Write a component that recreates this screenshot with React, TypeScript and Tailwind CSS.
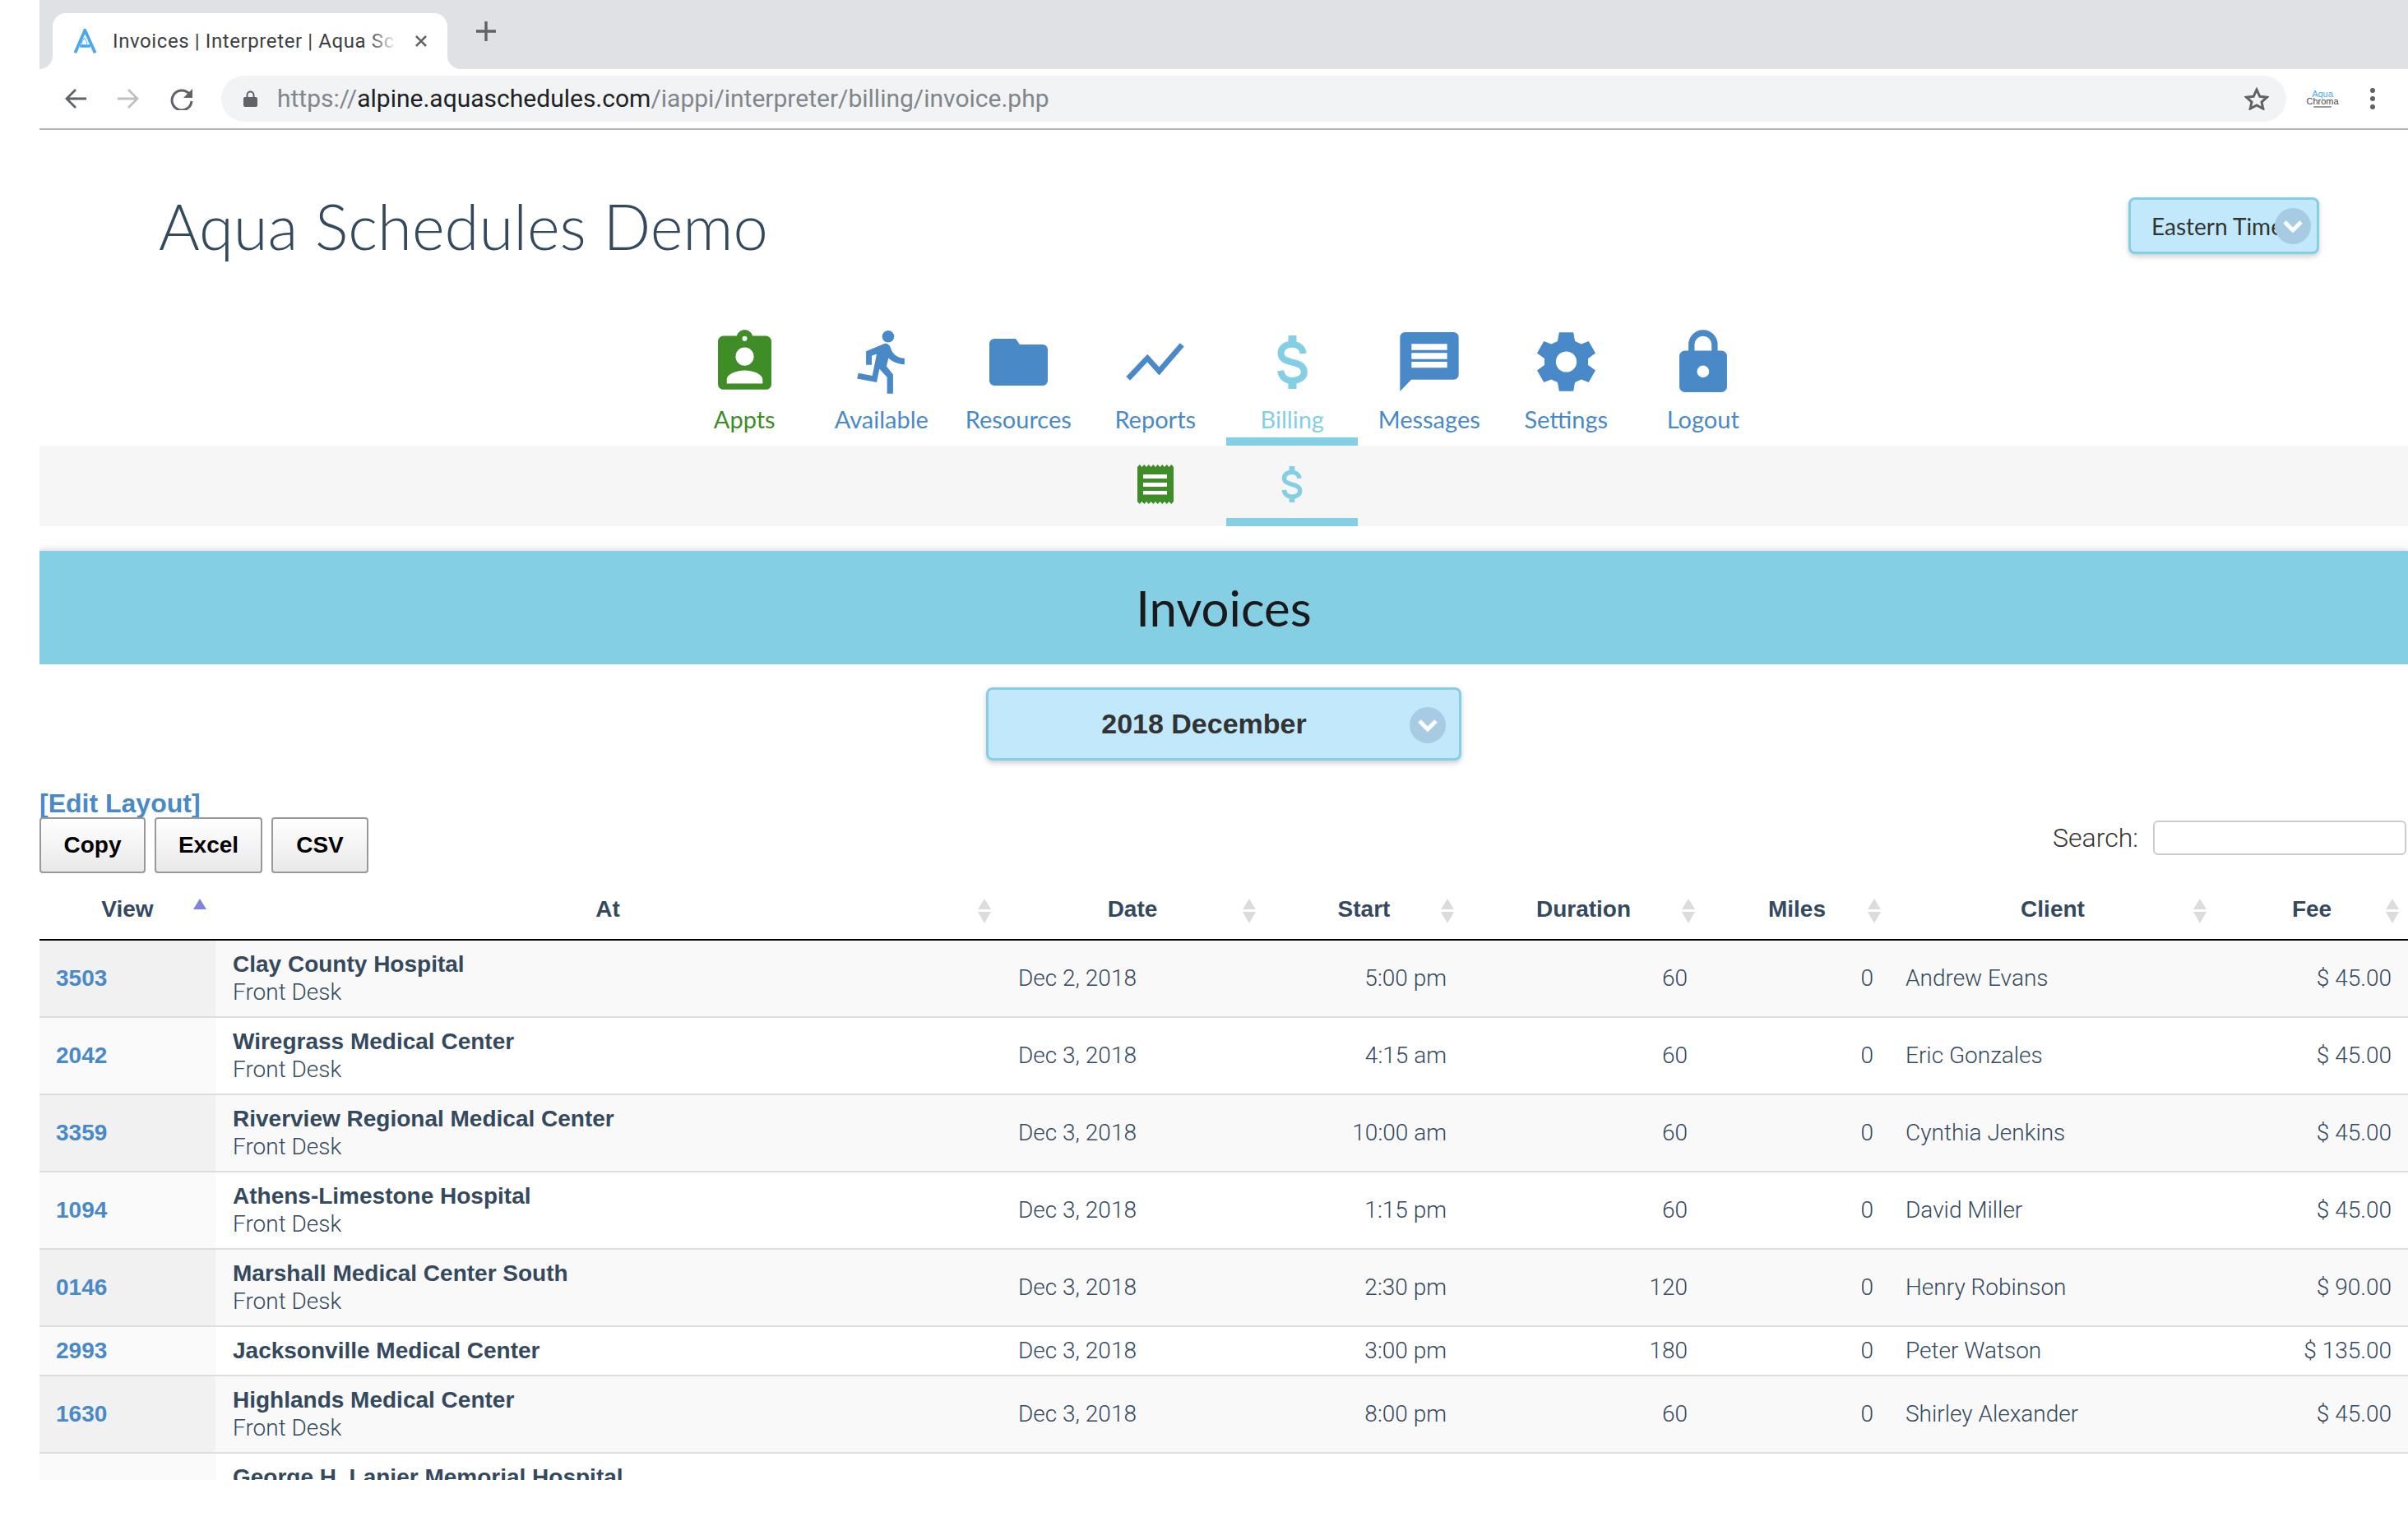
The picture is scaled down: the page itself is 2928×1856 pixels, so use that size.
const rows = [
  { id: '3503', at: 'Clay County Hospital', sub: 'Front Desk', date: 'Dec 2, 2018', start: '5:00 pm', dur: '60', miles: '0', client: 'Andrew Evans', fee: '$ 45.00' },
  { id: '2042', at: 'Wiregrass Medical Center', sub: 'Front Desk', date: 'Dec 3, 2018', start: '4:15 am', dur: '60', miles: '0', client: 'Eric Gonzales', fee: '$ 45.00' },
  { id: '3359', at: 'Riverview Regional Medical Center', sub: 'Front Desk', date: 'Dec 3, 2018', start: '10:00 am', dur: '60', miles: '0', client: 'Cynthia Jenkins', fee: '$ 45.00' },
  { id: '1094', at: 'Athens-Limestone Hospital', sub: 'Front Desk', date: 'Dec 3, 2018', start: '1:15 pm', dur: '60', miles: '0', client: 'David Miller', fee: '$ 45.00' },
  { id: '0146', at: 'Marshall Medical Center South', sub: 'Front Desk', date: 'Dec 3, 2018', start: '2:30 pm', dur: '120', miles: '0', client: 'Henry Robinson', fee: '$ 90.00' },
  { id: '2993', at: 'Jacksonville Medical Center', sub: '', date: 'Dec 3, 2018', start: '3:00 pm', dur: '180', miles: '0', client: 'Peter Watson', fee: '$ 135.00' },
  { id: '1630', at: 'Highlands Medical Center', sub: 'Front Desk', date: 'Dec 3, 2018', start: '8:00 pm', dur: '60', miles: '0', client: 'Shirley Alexander', fee: '$ 45.00' },
  { id: '', at: 'George H. Lanier Memorial Hospital', sub: 'Front Desk', date: '', start: '', dur: '', miles: '', client: '', fee: '' },
];

function SortArrows() {
  return (
    <svg className="absolute right-[11px] top-[31px]" width="16" height="30" viewBox="0 0 16 30">
      <polygon points="8,0 16,13 0,13" fill="#dcdcdc" />
      <polygon points="0,16 16,16 8,30" fill="#dcdcdc" />
    </svg>
  );
}

function Chevron() {
  return (
    <span className="flex h-[44px] w-[44px] items-center justify-center rounded-full bg-[#a6cbe3]">
      <svg width="24" height="16" viewBox="0 0 24 16">
        <path d="M2 3 L12 13 L22 3" fill="none" stroke="#fff" strokeWidth="5" />
      </svg>
    </span>
  );
}

function DollarIcon({ w, h }: { w: number; h: number }) {
  return (
    <svg width={w} height={h} viewBox="572 40 110 195">
      <rect x="612" y="40" width="30" height="40" fill="#84cfe4" />
      <rect x="612" y="195" width="30" height="40" fill="#84cfe4" />
      <path
        d="M667 106 C664 84 646 72 625 72 C601 72 585 87 585 104 C585 128 606 132 627 138 C650 144 670 150 670 174 C670 192 652 205 627 205 C604 205 587 193 584 168"
        fill="none"
        stroke="#84cfe4"
        strokeWidth="24"
      />
    </svg>
  );
}

function Gear() {
  return (
    <svg width="71" height="72" viewBox="-107 -108 214 216">
      <path
        fillRule="evenodd"
        fill="#4a89c7"
        d="M-26 -108 L26 -108 L32 -75 L55 -65 L82 -75 L107 -32 L80 -12 L80 12 L107 32 L82 75 L55 65 L32 75 L26 108 L-26 108 L-32 75 L-55 65 L-82 75 L-107 32 L-80 12 L-80 -12 L-107 -32 L-82 -75 L-55 -65 L-32 -75 Z M38 0 A38 38 0 1 0 -38 0 A38 38 0 1 0 38 0 Z"
      />
    </svg>
  );
}

const navItems = [
  {
    label: 'Appts',
    color: 'text-[#3f8d27]',
    icon: (
      <svg className="mb-[6px]" width="65" height="73" viewBox="42 18 194 217">
        <path
          fillRule="evenodd"
          fill="#3f8d27"
          d="M62 40 H110 C114 26 126 18 139 18 C152 18 164 26 168 40 H216 A20 20 0 0 1 236 60 V215 A20 20 0 0 1 216 235 H62 A20 20 0 0 1 42 215 V60 A20 20 0 0 1 62 40 Z M148 50 A9 9 0 1 0 130 50 A9 9 0 1 0 148 50 Z M172 115 A33 33 0 1 0 106 115 A33 33 0 1 0 172 115 Z M74 213 H204 V198 C204 180 173 165 139 165 C105 165 74 180 74 198 Z"
        />
      </svg>
    ),
  },
  {
    label: 'Available',
    color: 'text-[#4a89c7]',
    icon: (
      <svg className="ml-[-2px]" width="58" height="77" viewBox="540 24 174 232">
        <circle cx="654" cy="46" r="22" fill="#4a89c7" />
        <path
          fill="#4a89c7"
          d="M573 100 L640 72 C652 70 660 78 664 90 C670 108 685 124 714 126 V148 C690 147 668 138 655 125 L648 155 L672 185 V255 H650 V195 L622 165 L612 214 L540 200 L545 180 L596 190 L612 110 L594 117 V150 H573 Z"
        />
      </svg>
    ),
  },
  {
    label: 'Resources',
    color: 'text-[#4a89c7]',
    icon: (
      <svg width="71" height="57" viewBox="0 0 71 57">
        <path fill="#4a89c7" d="M6 0 H32 L37 7 H65 A6 6 0 0 1 71 13 V51 A6 6 0 0 1 65 57 H6 A6 6 0 0 1 0 51 V6 A6 6 0 0 1 6 0 Z" />
      </svg>
    ),
  },
  {
    label: 'Reports',
    color: 'text-[#4a89c7]',
    icon: (
      <svg width="71" height="46" viewBox="28 68 214 139">
        <polyline points="36,199 107,124 150,172 234,75" fill="none" stroke="#4a89c7" strokeWidth="20" />
      </svg>
    ),
  },
  { label: 'Billing', color: 'text-[#84cfe4]', active: true, icon: <DollarIcon w={37} h={65} /> },
  {
    label: 'Messages',
    color: 'text-[#4a89c7]',
    icon: (
      <svg width="72" height="72" viewBox="34 29 214 216">
        <path
          fillRule="evenodd"
          fill="#4a89c7"
          d="M52 29 H230 A18 18 0 0 1 248 47 V184 A18 18 0 0 1 230 202 H75 L34 245 V47 A18 18 0 0 1 52 29 Z M76 72 V94 H206 V72 Z M76 105 V127 H206 V105 Z M76 137 V159 H206 V137 Z"
        />
      </svg>
    ),
  },
  { label: 'Settings', color: 'text-[#4a89c7]', icon: <Gear /> },
  {
    label: 'Logout',
    color: 'text-[#4a89c7]',
    icon: (
      <svg className="mb-[3px]" width="58" height="76" viewBox="1052 18 173 227">
        <path d="M1096 100 V72 A42 42 0 0 1 1180 72 V100" fill="none" stroke="#4a89c7" strokeWidth="22" />
        <path
          fillRule="evenodd"
          fill="#4a89c7"
          d="M1072 94 H1205 A20 20 0 0 1 1225 114 V225 A20 20 0 0 1 1205 245 H1072 A20 20 0 0 1 1052 225 V114 A20 20 0 0 1 1072 94 Z M1160 170 A22 22 0 1 0 1116 170 A22 22 0 1 0 1160 170 Z"
        />
      </svg>
    ),
  },
];

function BrowserChrome() {
  return (
    <div className="font-['Roboto',sans-serif]">
      <div className="flex h-[84px] bg-[#dfe1e5] pl-[16px] pt-[16px]">
        <div className="relative flex h-[68px] w-[480px] items-center rounded-t-[16px] bg-white pl-[25px]">
          {/* flared tab corners */}
          <div className="absolute bottom-0 left-[-16px] h-[16px] w-[16px] bg-white">
            <div className="h-full w-full rounded-br-[16px] bg-[#dfe1e5]" />
          </div>
          <div className="absolute bottom-0 right-[-16px] h-[16px] w-[16px] bg-white">
            <div className="h-full w-full rounded-bl-[16px] bg-[#dfe1e5]" />
          </div>
          <svg width="29" height="30" viewBox="90 45 83 90">
            <path d="M95 133 L131 50 L168 133 M113 108 H150" fill="none" stroke="#4aa7ef" strokeWidth="11" />
            <path d="M129 78 C124 88 118 92 119 98 C120 106 136 106 138 98 C139 92 133 88 129 78 Z" fill="#fff" stroke="#4aa7ef" strokeWidth="3" />
          </svg>
          <div className="relative ml-[19px] w-[346px] overflow-hidden whitespace-nowrap text-[24px] leading-[34px] tracking-[0.6px] text-[#3c4043]">
            Invoices | Interpreter | Aqua Schedules
            <div className="absolute inset-y-0 right-0 w-[36px] bg-gradient-to-r from-transparent to-white" />
          </div>
          <svg className="ml-[21px]" width="16" height="16" viewBox="0 0 16 16">
            <path d="M2 2 L14 14 M14 2 L2 14" stroke="#5f6368" strokeWidth="2.6" />
          </svg>
        </div>
        <svg className="ml-[35px] mt-[10px]" width="24" height="24" viewBox="0 0 24 24">
          <path d="M12 0 V24 M0 12 H24" stroke="#5f6368" strokeWidth="3.4" />
        </svg>
      </div>
      <div className="flex h-[74px] items-center border-b-2 border-[#b5b5b5] bg-white pb-0">
        <svg className="ml-[31px]" width="26" height="24" viewBox="0 0 26 24">
          <path d="M26 12 H2 M13 1 L2 12 L13 23" fill="none" stroke="#5f6368" strokeWidth="2.8" />
        </svg>
        <svg className="ml-[38px]" width="26" height="24" viewBox="0 0 26 24">
          <path d="M0 12 H24 M13 1 L24 12 L13 23" fill="none" stroke="#bdbfc2" strokeWidth="2.8" />
        </svg>
        <svg className="ml-[38px]" width="28" height="28" viewBox="0 0 28 28">
          <path d="M23 8 A12 12 0 1 0 26 17" fill="none" stroke="#5f6368" strokeWidth="3" />
          <polygon points="27,2 27,13 16,13" fill="#5f6368" />
        </svg>
        <div className="ml-[34px] flex h-[56px] w-[2511px] items-center rounded-full bg-[#f1f3f4] pl-[27px]">
          <svg width="17" height="20" viewBox="0 0 17 20">
            <path d="M4.5 9 V5.5 A4 4 0 0 1 12.5 5.5 V9" fill="none" stroke="#5f6368" strokeWidth="2" />
            <rect x="0" y="8" width="17" height="12" rx="2" fill="#5f6368" />
          </svg>
          <div className="ml-[24px] whitespace-nowrap text-[30px] leading-[40px] text-[#80868b]">
            https://<span className="text-[#202124]">alpine.aquaschedules.com</span>/iappi/interpreter/billing/invoice.php
          </div>
          <svg className="ml-auto mr-[21px]" width="30" height="28" viewBox="0 0 30 28">
            <polygon points="15,3 18.8,11.3 27.6,12.2 21,18.1 22.8,26.2 15,22 7.2,26.2 9,18.1 2.4,12.2 11.2,11.3" fill="none" stroke="#5f6368" strokeWidth="3" />
          </svg>
        </div>
        <div className="ml-[27px] flex w-[34px] flex-col items-center font-['Liberation_Sans',sans-serif] text-[11px] leading-[9px]">
          <span className="text-[#4aa7ef]">Aqua</span>
          <span className="text-[#444]">Chroma</span>
          <div className="mt-[1px] h-[2px] w-[22px] rounded-full bg-[#999]" />
        </div>
        <div className="ml-[41px] flex flex-col gap-[4px]">
          <span className="h-[6px] w-[6px] rounded-full bg-[#5f6368]" />
          <span className="h-[6px] w-[6px] rounded-full bg-[#5f6368]" />
          <span className="h-[6px] w-[6px] rounded-full bg-[#5f6368]" />
        </div>
      </div>
    </div>
  );
}

function Receipt() {
  let top = 'M0 3';
  for (let i = 0; i < 8; i++) top += ` L${i * 5.5 + 2.75} 0 L${(i + 1) * 5.5} 3`;
  let bottom = '';
  for (let i = 8; i > 0; i--) bottom += ` L${i * 5.5 - 2.75} 48 L${(i - 1) * 5.5} 45`;
  return (
    <svg width="44" height="48" viewBox="0 0 44 48">
      <path fill="#3f8d27" d={`${top} L44 45${bottom} Z`} />
      <rect x="7" y="12" width="29" height="5" fill="#fff" />
      <rect x="7" y="22" width="29" height="5" fill="#fff" />
      <rect x="7" y="32" width="29" height="4.5" fill="#fff" />
    </svg>
  );
}

function InvoiceTable() {
  const th = "relative h-[82px] border-b-2 border-black pt-[8px] text-center text-[28px] font-bold text-[#34495e]";
  const td = "border-b-2 border-[#ddd] text-[28px] font-light font-['Roboto',sans-serif]";
  return (
    <table className="w-[2880px] table-fixed border-separate border-spacing-0 font-['Liberation_Sans',sans-serif] text-[#34495e]">
      <colgroup>
        <col className="w-[214px]" />
        <col className="w-[954px]" />
        <col className="w-[322px]" />
        <col className="w-[241px]" />
        <col className="w-[293px]" />
        <col className="w-[226px]" />
        <col className="w-[396px]" />
        <col className="w-[234px]" />
      </colgroup>
      <thead>
        <tr>
          <th className={th}>
            View
            <svg className="absolute right-[11px] top-[31px]" width="16" height="13" viewBox="0 0 16 13">
              <polygon points="8,0 16,13 0,13" fill="#7f83da" />
            </svg>
          </th>
          {['At', 'Date', 'Start', 'Duration', 'Miles', 'Client', 'Fee'].map((h) => (
            <th key={h} className={th}>
              {h}
              <SortArrows />
            </th>
          ))}
        </tr>
      </thead>
      <tbody>
        {rows.map((r, i) => {
          const odd = i % 2 === 0;
          const rowBg = odd ? 'bg-[#f9f9f9]' : 'bg-white';
          return (
            <tr key={r.at} className={r.sub ? 'h-[94px]' : 'h-[60px]'}>
              <td className={`border-b-2 border-[#ddd] pl-[20px] text-[28px] font-bold text-[#4a89c7] ${odd ? 'bg-[#f1f1f1]' : 'bg-[#fafafa]'}`}>{r.id}</td>
              <td className={`border-b-2 border-[#ddd] pl-[21px] text-[28px] leading-[34px] ${rowBg}`}>
                <div className="font-bold">{r.at}</div>
                {r.sub && <div className="font-['Roboto',sans-serif] font-light">{r.sub}</div>}
              </td>
              <td className={`${td} pl-[22px] ${rowBg}`}>{r.date}</td>
              <td className={`${td} pr-[20px] text-right ${rowBg}`}>{r.start}</td>
              <td className={`${td} pr-[20px] text-right ${rowBg}`}>{r.dur}</td>
              <td className={`${td} pr-[20px] text-right ${rowBg}`}>{r.miles}</td>
              <td className={`${td} pl-[19px] ${rowBg}`}>{r.client}</td>
              <td className={`${td} pr-[20px] text-right ${rowBg}`}>{r.fee}</td>
            </tr>
          );
        })}
      </tbody>
    </table>
  );
}

export default function App() {
  return (
    <div className="h-[1856px] w-[2928px] overflow-hidden bg-white pl-[48px]">
      <div className="h-[1800px] w-[2880px] overflow-hidden">
        <BrowserChrome />

        {/* Title row */}
        <div className="flex h-[239px] items-start justify-between pl-[145px] pr-[108px] font-['Lato',sans-serif]">
          <h1 className="mt-[72px] text-[76px] font-light leading-[90px] text-[#34495e]">Aqua Schedules Demo</h1>
          <div className="relative mt-[82px] flex h-[69px] w-[232px] items-center rounded-[8px] border-[3px] border-[#85cfe4] bg-[#c1e9fb] pl-[25px] text-[28px] text-[#333] shadow-[0_3px_6px_rgba(0,0,0,0.2)]">
            Eastern Time
            <span className="absolute right-[7px] top-[10px]">
              <Chevron />
            </span>
          </div>
        </div>

        {/* Main nav */}
        <div className="flex justify-center gap-[6.5px] font-['Lato',sans-serif] text-[29px]">
          {navItems.map((n) => (
            <div key={n.label} className={`flex h-[145px] w-[160px] flex-col items-center border-b-[10px] ${n.active ? 'border-[#84cfe4]' : 'border-transparent'} ${n.color}`}>
              <div className="mt-[3px] flex h-[80px] items-center justify-center">{n.icon}</div>
              <div className="mt-[12px] leading-[36px]">{n.label}</div>
            </div>
          ))}
        </div>

        {/* Sub nav */}
        <div className="flex h-[98px] justify-center gap-[6.5px] bg-[#f6f6f6]">
          <div className="flex w-[160px] items-center justify-center pb-[4px] pt-[0px]">
            <Receipt />
          </div>
          <div className="flex w-[160px] items-center justify-center border-b-[10px] border-[#84cfe4] pt-[6px]">
            <DollarIcon w={26} h={44} />
          </div>
        </div>

        {/* Page banner */}
        <div className="mt-[30px] flex h-[138px] items-center justify-center bg-[#84cfe4] font-['Lato',sans-serif] text-[60px] text-[#1a1a1a] shadow-[0_-3px_6px_rgba(0,0,0,0.12)]">
          Invoices
        </div>

        {/* Month select */}
        <div className="relative mx-auto mt-[28px] flex h-[89px] w-[578px] items-center justify-center rounded-[8px] border-[3px] border-[#85cfe4] bg-[#c1e9fb] pr-[48px] font-['Liberation_Sans',sans-serif] text-[34px] font-bold text-[#333] shadow-[0_3px_6px_rgba(0,0,0,0.2)]">
          2018 December
          <span className="absolute right-[16px] top-[21px]">
            <Chevron />
          </span>
        </div>

        {/* Toolbar */}
        <div className="mt-[36px] font-['Liberation_Sans',sans-serif] text-[32px] font-bold leading-[33px] text-[#4a89c7]">[Edit Layout]</div>
        <div className="flex h-[68px] items-start justify-between font-['Liberation_Sans',sans-serif]">
          <div className="flex gap-[11px] text-[28px] font-bold text-black">
            <div className="flex h-[68px] w-[129px] items-center justify-center rounded-[4px] border-2 border-[#999] bg-gradient-to-b from-white to-[#e9e9e9]">Copy</div>
            <div className="flex h-[68px] w-[131px] items-center justify-center rounded-[4px] border-2 border-[#999] bg-gradient-to-b from-white to-[#e9e9e9]">Excel</div>
            <div className="flex h-[68px] w-[118px] items-center justify-center rounded-[4px] border-2 border-[#999] bg-gradient-to-b from-white to-[#e9e9e9]">CSV</div>
          </div>
          <div className="flex items-center gap-[18px] pr-[2px] pt-[1px] font-['Roboto',sans-serif] text-[32px] font-light text-[#333]">
            Search:
            <div className="h-[42px] w-[308px] rounded-[6px] border-2 border-[#ccc] bg-white" />
          </div>
        </div>

        <InvoiceTable />
      </div>
    </div>
  );
}
